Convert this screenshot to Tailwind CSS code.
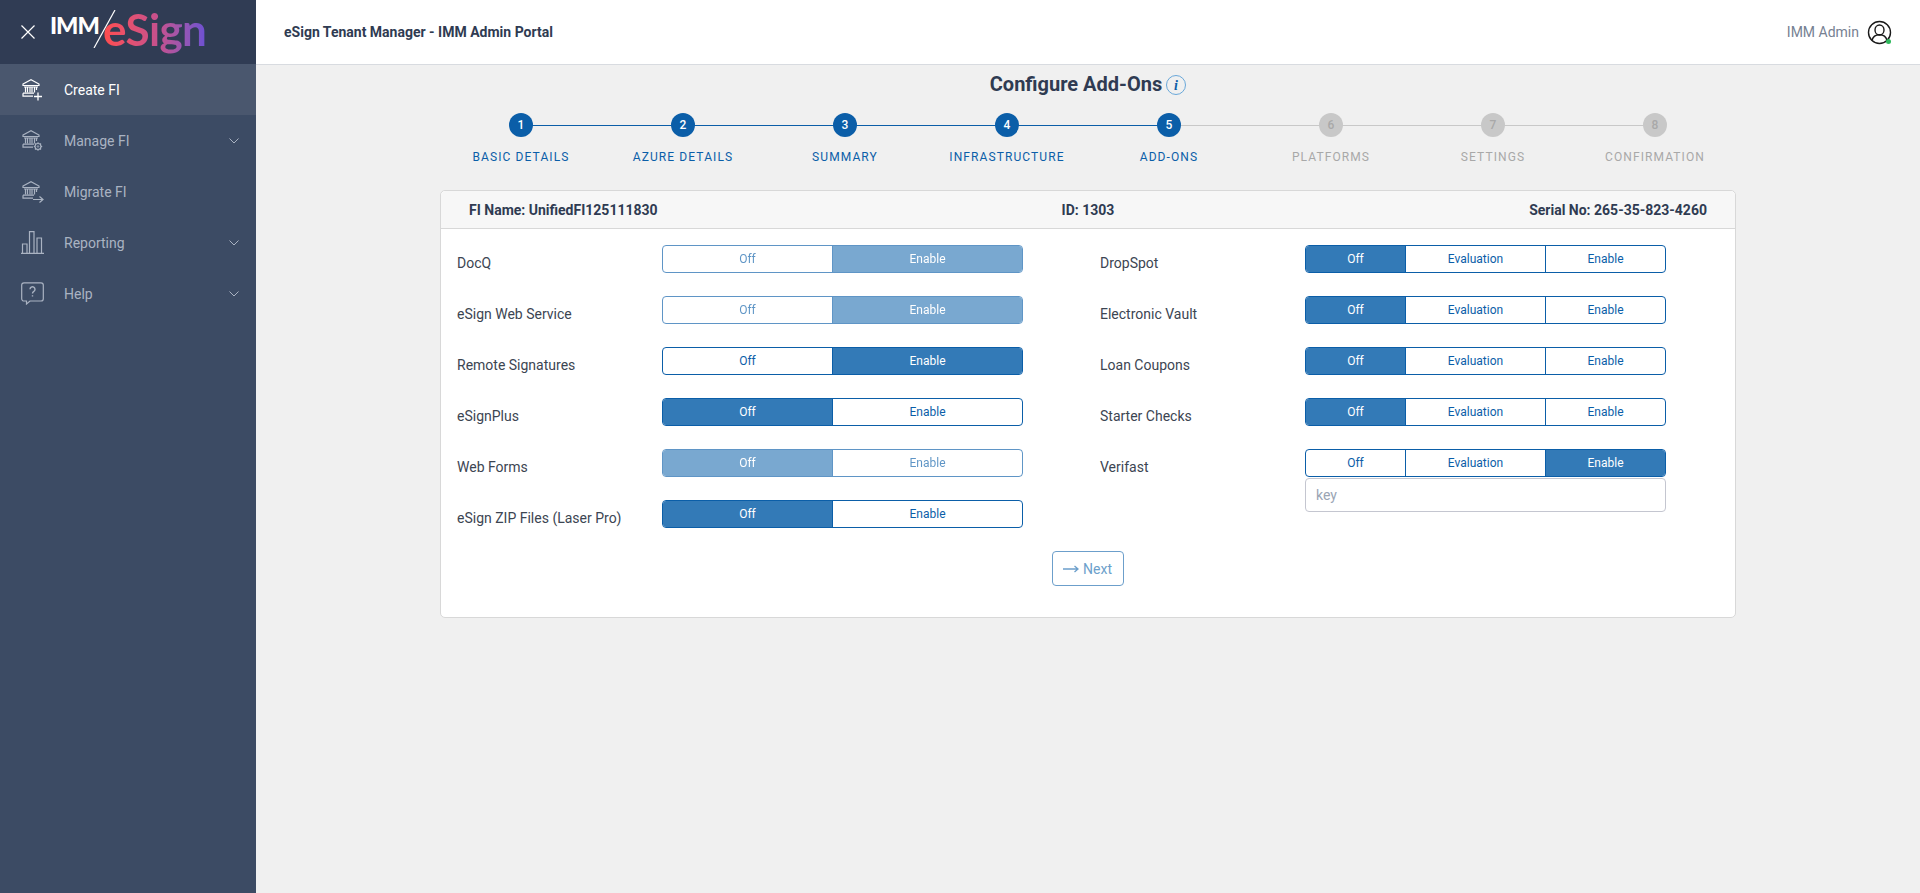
<!DOCTYPE html>
<html lang="en">
<head>
  <meta charset="UTF-8" />
  <meta name="viewport" content="width=device-width, initial-scale=1" />
  <title>eSign Tenant Manager - IMM Admin Portal</title>
  <script src="https://cdn.jsdelivr.net/npm/@tailwindcss/browser@4"></script>
</head>
<body class="bg-[#f0f0f0] text-[#3c4552] font-['Roboto',sans-serif] text-sm h-[893px] overflow-hidden">

<svg width="0" height="0" class="absolute">
  <symbol id="bank" viewBox="0 0 18 18" fill="none" stroke="currentColor" stroke-width="1.2">
    <path d="M1 5 9 .8 17 5v1.500H1z" />
    <path d="M2 8h14M3.500 8v5.500M5.500 8v5.500M8 8v5.500M10 8v5.500M12.500 8v5.500M14.500 8v3" />
    <path d="M1 14.200h11M1 14.200v3h10" />
  </symbol>
  <symbol id="chev" viewBox="0 0 10 6" fill="none" stroke="currentColor" stroke-width="1">
    <path d="M.5.5 5 5 9.500.5" />
  </symbol>
</svg>

<div class="flex h-full">
  <!-- sidebar -->
  <aside class="w-[256px] shrink-0 bg-[#3c4b64] text-[#aab3c2]">
    <div class="h-16 bg-[#303c54] flex items-center pl-[21px]">
      <svg class="w-[14px] h-[14px] text-white" viewBox="0 0 14 14" fill="none" stroke="currentColor" stroke-width="1.2"><path d="M.5.5l13 13M13.500.5l-13 13" /></svg>
      <div class="relative ml-[15px] h-16 w-[160px] font-['Lato',sans-serif]">
        <span class="absolute left-0 top-[9px] text-white text-[23.500px] font-black leading-[32px] tracking-[-1px]">IMM</span>
        <svg class="absolute left-[43px] top-[10px]" width="23" height="38" viewBox="0 0 23 38" fill="none" stroke="#fff" stroke-width="1.200"><path d="M22 0 1 38" /></svg>
        <span class="absolute left-[53px] top-[2px] text-[44px] leading-[54px] font-bold tracking-[-0.6px] text-transparent bg-clip-text bg-gradient-to-r from-[#ff4c4c] via-[#c4508f] via-55% to-[#6c50d2]">eSign</span>
      </div>
    </div>
    <nav>
      <a class="h-[51px] bg-[#4a576e] text-white flex items-center pl-[22px]">
        <svg class="w-[21px] h-[22px]" viewBox="0 0 21 22" fill="none" stroke="currentColor"><use href="#bank" width="18" height="18" /><path d="M16 13.500v8M12 17.500h8" stroke-width="1.300" /></svg>
        <span class="ml-[21px]">Create FI</span>
      </a>
      <a class="h-[51px] flex items-center pl-[22px] pr-[17px]">
        <svg class="w-[21px] h-[22px]" viewBox="0 0 21 22" fill="none" stroke="currentColor"><use href="#bank" width="18" height="18" /><circle cx="16" cy="16.500" r="3" fill="#3c4b64" stroke-width="1.200" /><circle cx="16" cy="16.500" r=".8" stroke-width=".8" /><path d="M16 12.300v1.200M16 19.500v1.200M11.800 16.500H13M19 16.500h1.200M13 13.500l.9.900M18.100 18.600l.9.900M19 13.500l-.9.900M13.900 18.600l-.9.900" stroke-width="1.100" /></svg>
        <span class="ml-[21px]">Manage FI</span>
        <svg class="ml-auto w-[10px] h-[6px]"><use href="#chev" /></svg>
      </a>
      <a class="h-[51px] flex items-center pl-[22px]">
        <svg class="w-[22px] h-[22px]" viewBox="0 0 22 22" fill="none" stroke="currentColor"><use href="#bank" width="18" height="18" /><path d="M11 18.500h10M17.500 15.500l3.500 3-3.500 3" stroke-width="1.200" /></svg>
        <span class="ml-[20px]">Migrate FI</span>
      </a>
      <a class="h-[51px] flex items-center pl-[21px] pr-[17px]">
        <svg class="w-[23px] h-[23px]" viewBox="0 0 23 23" fill="none" stroke="currentColor" stroke-width="1.200"><path d="M0 22.400h23M1.500 22v-9H6v9M8.500 22V.7H13V22M16 22V7h4.500v15" /></svg>
        <span class="ml-[20px]">Reporting</span>
        <svg class="ml-auto w-[10px] h-[6px]"><use href="#chev" /></svg>
      </a>
      <a class="h-[51px] flex items-center pl-[21px] pr-[17px]">
        <svg class="w-[23px] h-[23px]" viewBox="0 0 23 23" fill="none" stroke="currentColor" stroke-width="1.200"><path d="M3 .8h17a2.300 2.300 0 0 1 2.300 2.300v13.600a2.300 2.300 0 0 1-2.300 2.300H9l-3.500 3v-3H3A2.300 2.300 0 0 1 .7 16.700V3.100A2.300 2.300 0 0 1 3 .8z" /><path d="M9 7.200a2.500 2.500 0 1 1 3.800 2.200c-.9.500-1.300 1-1.300 2.100M11.500 13.200v1.300" stroke-width="1.400" /></svg>
        <span class="ml-[20px]">Help</span>
        <svg class="ml-auto w-[10px] h-[6px]"><use href="#chev" /></svg>
      </a>
    </nav>
  </aside>

  <div class="flex-1 min-w-0">
    <!-- top bar -->
    <header class="h-[65px] bg-white border-b border-[#d8dbe0] flex items-center pl-[28px] pr-[28px]">
      <h2 class="font-bold text-sm text-[#2f3b52]">eSign Tenant Manager - IMM Admin Portal</h2>
      <span class="ml-auto text-[#768192]">IMM Admin</span>
      <span class="relative ml-[8px] w-[25px] h-[25px]">
        <svg class="w-[25px] h-[25px] text-[#1a1a1a]" viewBox="0 0 25 25" fill="none" stroke="currentColor" stroke-width="1.400"><circle cx="12.500" cy="12.500" r="11" /><ellipse cx="12.500" cy="10" rx="4.500" ry="5" /><path d="M5 20.500c.8-3.500 3.800-5.800 7.500-5.800s6.700 2.300 7.500 5.800" /></svg>
        <span class="absolute right-[1px] bottom-[1px] w-[5px] h-[5px] rounded-full bg-[#2eb85c]"></span>
      </span>
    </header>

    <main class="w-[1296px] mx-auto">
      <h1 class="h-[39px] flex items-center justify-center gap-[4px] text-[20px] font-bold text-[#2f3b52]">
        Configure Add-Ons
        <svg class="w-[20px] h-[20px]" viewBox="0 0 20 20" fill="none"><circle cx="10" cy="10" r="9.500" stroke="#5a9fd6" stroke-width=".9" /><text x="10" y="15" text-anchor="middle" fill="#0b5ea8" font-family="Liberation Serif" font-style="italic" font-weight="700" font-size="14">i</text></svg>
      </h1>

      <!-- stepper -->
      <ol class="grid grid-cols-8 h-[86px] pt-[9px] text-xs tracking-[1.1px] uppercase">
        <li class="relative flex flex-col items-center text-[#0b5ea8]">
          <span class="absolute left-1/2 top-[12px] w-full h-px bg-[#0b5ea8]"></span>
          <span class="relative w-6 h-6 rounded-full bg-[#0b5ea8] text-white font-medium flex items-center justify-center tracking-normal">1</span>
          <span class="mt-[12px] leading-[16px]">Basic Details</span>
        </li>
        <li class="relative flex flex-col items-center text-[#0b5ea8]">
          <span class="absolute left-1/2 top-[12px] w-full h-px bg-[#0b5ea8]"></span>
          <span class="relative w-6 h-6 rounded-full bg-[#0b5ea8] text-white font-medium flex items-center justify-center tracking-normal">2</span>
          <span class="mt-[12px] leading-[16px]">Azure Details</span>
        </li>
        <li class="relative flex flex-col items-center text-[#0b5ea8]">
          <span class="absolute left-1/2 top-[12px] w-full h-px bg-[#0b5ea8]"></span>
          <span class="relative w-6 h-6 rounded-full bg-[#0b5ea8] text-white font-medium flex items-center justify-center tracking-normal">3</span>
          <span class="mt-[12px] leading-[16px]">Summary</span>
        </li>
        <li class="relative flex flex-col items-center text-[#0b5ea8]">
          <span class="absolute left-1/2 top-[12px] w-full h-px bg-[#0b5ea8]"></span>
          <span class="relative w-6 h-6 rounded-full bg-[#0b5ea8] text-white font-medium flex items-center justify-center tracking-normal">4</span>
          <span class="mt-[12px] leading-[16px]">Infrastructure</span>
        </li>
        <li class="relative flex flex-col items-center text-[#0b5ea8]">
          <span class="absolute left-1/2 top-[12px] w-full h-px bg-[#c8c8c8]"></span>
          <span class="relative w-6 h-6 rounded-full bg-[#0b5ea8] text-white font-medium flex items-center justify-center tracking-normal">5</span>
          <span class="mt-[12px] leading-[16px]">Add-Ons</span>
        </li>
        <li class="relative flex flex-col items-center text-[#a8a8a8]">
          <span class="absolute left-1/2 top-[12px] w-full h-px bg-[#c8c8c8]"></span>
          <span class="relative w-6 h-6 rounded-full bg-[#c8c8c8] font-medium flex items-center justify-center tracking-normal">6</span>
          <span class="mt-[12px] leading-[16px]">Platforms</span>
        </li>
        <li class="relative flex flex-col items-center text-[#a8a8a8]">
          <span class="absolute left-1/2 top-[12px] w-full h-px bg-[#c8c8c8]"></span>
          <span class="relative w-6 h-6 rounded-full bg-[#c8c8c8] font-medium flex items-center justify-center tracking-normal">7</span>
          <span class="mt-[12px] leading-[16px]">Settings</span>
        </li>
        <li class="relative flex flex-col items-center text-[#a8a8a8]">
          <span class="relative w-6 h-6 rounded-full bg-[#c8c8c8] font-medium flex items-center justify-center tracking-normal">8</span>
          <span class="mt-[12px] leading-[16px]">Confirmation</span>
        </li>
      </ol>

      <!-- card -->
      <section class="bg-white border border-[#d8d8d8] rounded-[5px] h-[428px]">
        <div class="grid grid-cols-3 items-center h-[38px] px-7 bg-[#f7f7f7] border-b border-[#d8d8d8] rounded-t-[5px] font-bold text-[#2f3b52]">
          <span>FI Name: UnifiedFI125111830</span>
          <span class="text-center">ID: 1303</span>
          <span class="text-right">Serial No: 265-35-823-4260</span>
        </div>

        <div class="flex pl-[16px] pt-[16px] gap-[77px]">
          <!-- left column -->
          <div class="w-[566px] flex flex-col gap-[23px]">
            <div class="flex h-7">
              <span class="w-[205px] pt-[8px] leading-[20px]">DocQ</span>
              <div class="flex-1 flex text-xs opacity-65 border border-[#0b5ea8] rounded-[4px] overflow-hidden">
                <span class="w-[169px] flex items-center justify-center text-[#0b5ea8]">Off</span>
                <span class="flex-1 flex items-center justify-center bg-[#337ab7] text-white border-l border-[#0b5ea8]">Enable</span>
              </div>
            </div>
            <div class="flex h-7">
              <span class="w-[205px] pt-[8px] leading-[20px]">eSign Web Service</span>
              <div class="flex-1 flex text-xs opacity-65 border border-[#0b5ea8] rounded-[4px] overflow-hidden">
                <span class="w-[169px] flex items-center justify-center text-[#0b5ea8]">Off</span>
                <span class="flex-1 flex items-center justify-center bg-[#337ab7] text-white border-l border-[#0b5ea8]">Enable</span>
              </div>
            </div>
            <div class="flex h-7">
              <span class="w-[205px] pt-[8px] leading-[20px]">Remote Signatures</span>
              <div class="flex-1 flex text-xs border border-[#0b5ea8] rounded-[4px] overflow-hidden">
                <span class="w-[169px] flex items-center justify-center text-[#0b5ea8]">Off</span>
                <span class="flex-1 flex items-center justify-center bg-[#337ab7] text-white border-l border-[#0b5ea8]">Enable</span>
              </div>
            </div>
            <div class="flex h-7">
              <span class="w-[205px] pt-[8px] leading-[20px]">eSignPlus</span>
              <div class="flex-1 flex text-xs border border-[#0b5ea8] rounded-[4px] overflow-hidden">
                <span class="w-[169px] flex items-center justify-center bg-[#337ab7] text-white">Off</span>
                <span class="flex-1 flex items-center justify-center text-[#0b5ea8] border-l border-[#0b5ea8]">Enable</span>
              </div>
            </div>
            <div class="flex h-7">
              <span class="w-[205px] pt-[8px] leading-[20px]">Web Forms</span>
              <div class="flex-1 flex text-xs opacity-65 border border-[#0b5ea8] rounded-[4px] overflow-hidden">
                <span class="w-[169px] flex items-center justify-center bg-[#337ab7] text-white">Off</span>
                <span class="flex-1 flex items-center justify-center text-[#0b5ea8] border-l border-[#0b5ea8]">Enable</span>
              </div>
            </div>
            <div class="flex h-7">
              <span class="w-[205px] pt-[8px] leading-[20px]">eSign ZIP Files (Laser Pro)</span>
              <div class="flex-1 flex text-xs border border-[#0b5ea8] rounded-[4px] overflow-hidden">
                <span class="w-[169px] flex items-center justify-center bg-[#337ab7] text-white">Off</span>
                <span class="flex-1 flex items-center justify-center text-[#0b5ea8] border-l border-[#0b5ea8]">Enable</span>
              </div>
            </div>
          </div>

          <!-- right column -->
          <div class="w-[566px] flex flex-col gap-[23px]">
            <div class="flex h-7">
              <span class="w-[205px] pt-[8px] leading-[20px]">DropSpot</span>
              <div class="flex-1 flex text-xs border border-[#0b5ea8] rounded-[4px] overflow-hidden">
                <span class="w-[99px] flex items-center justify-center bg-[#337ab7] text-white">Off</span>
                <span class="w-[140px] flex items-center justify-center text-[#0b5ea8] border-l border-[#0b5ea8]">Evaluation</span>
                <span class="flex-1 flex items-center justify-center text-[#0b5ea8] border-l border-[#0b5ea8]">Enable</span>
              </div>
            </div>
            <div class="flex h-7">
              <span class="w-[205px] pt-[8px] leading-[20px]">Electronic Vault</span>
              <div class="flex-1 flex text-xs border border-[#0b5ea8] rounded-[4px] overflow-hidden">
                <span class="w-[99px] flex items-center justify-center bg-[#337ab7] text-white">Off</span>
                <span class="w-[140px] flex items-center justify-center text-[#0b5ea8] border-l border-[#0b5ea8]">Evaluation</span>
                <span class="flex-1 flex items-center justify-center text-[#0b5ea8] border-l border-[#0b5ea8]">Enable</span>
              </div>
            </div>
            <div class="flex h-7">
              <span class="w-[205px] pt-[8px] leading-[20px]">Loan Coupons</span>
              <div class="flex-1 flex text-xs border border-[#0b5ea8] rounded-[4px] overflow-hidden">
                <span class="w-[99px] flex items-center justify-center bg-[#337ab7] text-white">Off</span>
                <span class="w-[140px] flex items-center justify-center text-[#0b5ea8] border-l border-[#0b5ea8]">Evaluation</span>
                <span class="flex-1 flex items-center justify-center text-[#0b5ea8] border-l border-[#0b5ea8]">Enable</span>
              </div>
            </div>
            <div class="flex h-7">
              <span class="w-[205px] pt-[8px] leading-[20px]">Starter Checks</span>
              <div class="flex-1 flex text-xs border border-[#0b5ea8] rounded-[4px] overflow-hidden">
                <span class="w-[99px] flex items-center justify-center bg-[#337ab7] text-white">Off</span>
                <span class="w-[140px] flex items-center justify-center text-[#0b5ea8] border-l border-[#0b5ea8]">Evaluation</span>
                <span class="flex-1 flex items-center justify-center text-[#0b5ea8] border-l border-[#0b5ea8]">Enable</span>
              </div>
            </div>
            <div class="flex h-[63px]">
              <span class="w-[205px] pt-[8px] leading-[20px]">Verifast</span>
              <div class="flex-1">
                <div class="flex h-7 text-xs border border-[#0b5ea8] rounded-[4px] overflow-hidden">
                  <span class="w-[99px] flex items-center justify-center text-[#0b5ea8]">Off</span>
                  <span class="w-[140px] flex items-center justify-center text-[#0b5ea8] border-l border-[#0b5ea8]">Evaluation</span>
                  <span class="flex-1 flex items-center justify-center bg-[#337ab7] text-white border-l border-[#0b5ea8]">Enable</span>
                </div>
                <input placeholder="key" class="block mt-px w-full h-[34px] px-[10px] border border-[#c4c6d0] rounded-[4px] placeholder:text-[#9aa5b4] outline-none" />
              </div>
            </div>
          </div>
        </div>

        <div class="flex justify-center mt-[23px] pr-px">
          <button class="h-[35px] w-[72px] flex items-center justify-center gap-[4px] border border-[#6c9fcb] rounded-[4px] text-[#6c9fcb]">
            <svg class="w-[16px] h-[10px]" viewBox="0 0 16 10" fill="none" stroke="currentColor" stroke-width="1.300"><path d="M0 5h15M11.500 2 15 5l-3.500 3" /></svg>
            Next
          </button>
        </div>
      </section>
    </main>
  </div>
</div>

</body>
</html>
